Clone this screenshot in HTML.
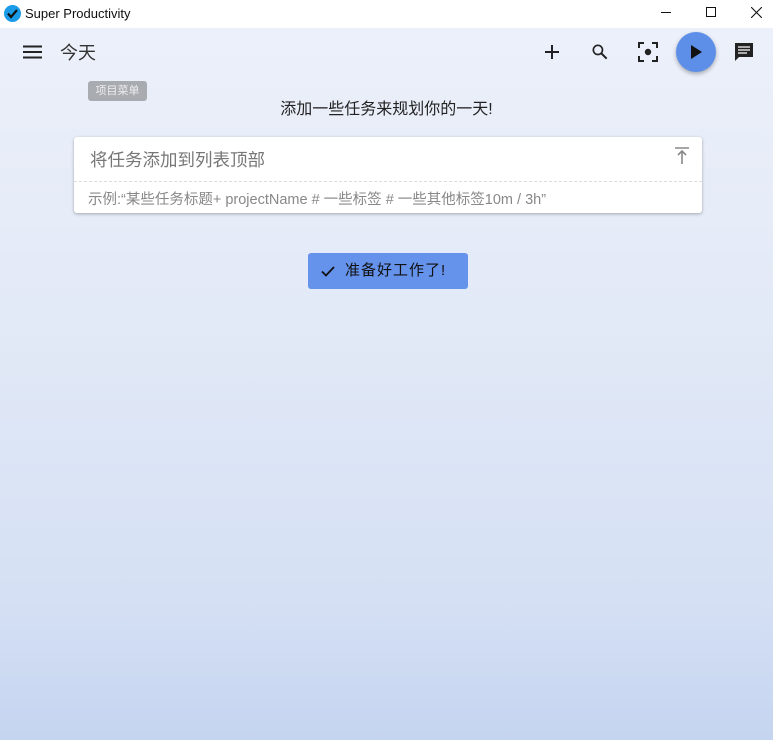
<!DOCTYPE html>
<html><head><meta charset="utf-8"><style>
*{margin:0;padding:0;box-sizing:border-box}
body{width:773px;height:740px;overflow:hidden;font-family:"Liberation Sans","Noto Sans CJK SC",sans-serif;position:relative;background:linear-gradient(#ecf0fa 28px,#e3eaf7 300px,#d5e0f4 600px,#c5d4f0 740px)}
.tb{position:absolute;left:0;top:0;width:773px;height:28px;background:#fff;font-size:13px;color:#111}
.abs{position:absolute;white-space:nowrap}
</style></head><body>
<div class="tb">
<svg class="abs" style="left:4px;top:5px" width="17" height="17" viewBox="0 0 17 17"><circle cx="8.5" cy="8.5" r="8.5" fill="#1a9be8"/><path d="M4 8.5l3 3.5 6-7" stroke="#111" stroke-width="2.2" fill="none"/></svg>
<span class="abs" style="left:25px;top:6px">Super Productivity</span>
<div class="abs" style="left:661px;top:12px;width:10px;height:1px;background:#111"></div>
<div class="abs" style="left:706px;top:7px;width:10px;height:10px;border:1px solid #111"></div>
<svg class="abs" style="left:751px;top:7px" width="11" height="11"><path d="M0 0L11 11M11 0L0 11" stroke="#111" stroke-width="1.1"/></svg>
</div>
<svg class="abs" style="left:23px;top:45px" width="19" height="14"><path d="M0 1.5h19M0 7h19M0 12.5h19" stroke="#222" stroke-width="2"/></svg>
<span class="abs" style="left:60px;top:39px;font-size:18px;color:#333">今天</span>
<div class="abs" style="left:88px;top:81px;width:59px;height:20px;background:#a8abb0;border-radius:3px;color:#eee;font-size:11px;text-align:center;line-height:20px">项目菜单</div>
<svg class="abs" style="left:544px;top:44px" width="16" height="16"><path d="M8 1v14M1 8h14" stroke="#222" stroke-width="2"/></svg>
<svg class="abs" style="left:590px;top:42px" width="20" height="20" viewBox="0 0 24 24"><circle cx="9.5" cy="9.5" r="5.5" stroke="#222" stroke-width="2" fill="none"/><path d="M13.5 13.5L20 20" stroke="#222" stroke-width="2.4"/></svg>
<svg class="abs" style="left:638px;top:42px" width="20" height="20" viewBox="0 0 20 20"><path d="M1 6V1h5M14 1h5v5M19 14v5h-5M6 19H1v-5" stroke="#222" stroke-width="2" fill="none"/><circle cx="10" cy="10" r="3.2" fill="#222"/></svg>
<div class="abs" style="left:676px;top:32px;width:40px;height:40px;border-radius:50%;background:#5d8ee8;box-shadow:0 2px 4px rgba(0,0,0,.3)"></div>
<svg class="abs" style="left:691px;top:45px" width="12" height="14"><path d="M0 0L11 7L0 14Z" fill="#111"/></svg>
<svg class="abs" style="left:734px;top:42px" width="20" height="20" viewBox="0 0 20 20"><path d="M1 1h18v14H5l-4 4z" fill="#222"/><path d="M4 5h12M4 8h12M4 11h9" stroke="#fff" stroke-width="1.3"/></svg>
<div class="abs" style="left:0;top:95px;width:773px;text-align:center;font-size:16px;color:#222">添加一些任务来规划你的一天!</div>
<div class="abs" style="left:74px;top:137px;width:628px;height:76px;background:#fff;border-radius:3px;box-shadow:0 1px 3px rgba(0,0,0,.3)">
<span class="abs" style="left:16px;top:10px;font-size:17.5px;color:#777">将任务添加到列表顶部</span>
<svg class="abs" style="left:600px;top:10px" width="16" height="18"><path d="M1 1h14M8 4v13M4 8l4-4 4 4" stroke="#888" stroke-width="1.6" fill="none"/></svg>
<div class="abs" style="left:0;top:44px;width:628px;border-top:1px dashed #ddd"></div>
<span class="abs" style="left:14px;top:51px;font-size:14.5px;color:#888">示例:“某些任务标题+ projectName # 一些标签 # 一些其他标签10m / 3h”</span>
</div>
<div class="abs" style="left:308px;top:253px;width:160px;height:36px;background:#6592ea;border-radius:3px;font-size:15px;color:#111;line-height:36px">
<svg class="abs" style="left:13px;top:13px" width="14" height="11"><path d="M1 5.5l4 4L13 1" stroke="#111" stroke-width="1.8" fill="none"/></svg>
<span class="abs" style="left:37px;top:0;letter-spacing:1px">准备好工作了!</span></div>
</body></html>
